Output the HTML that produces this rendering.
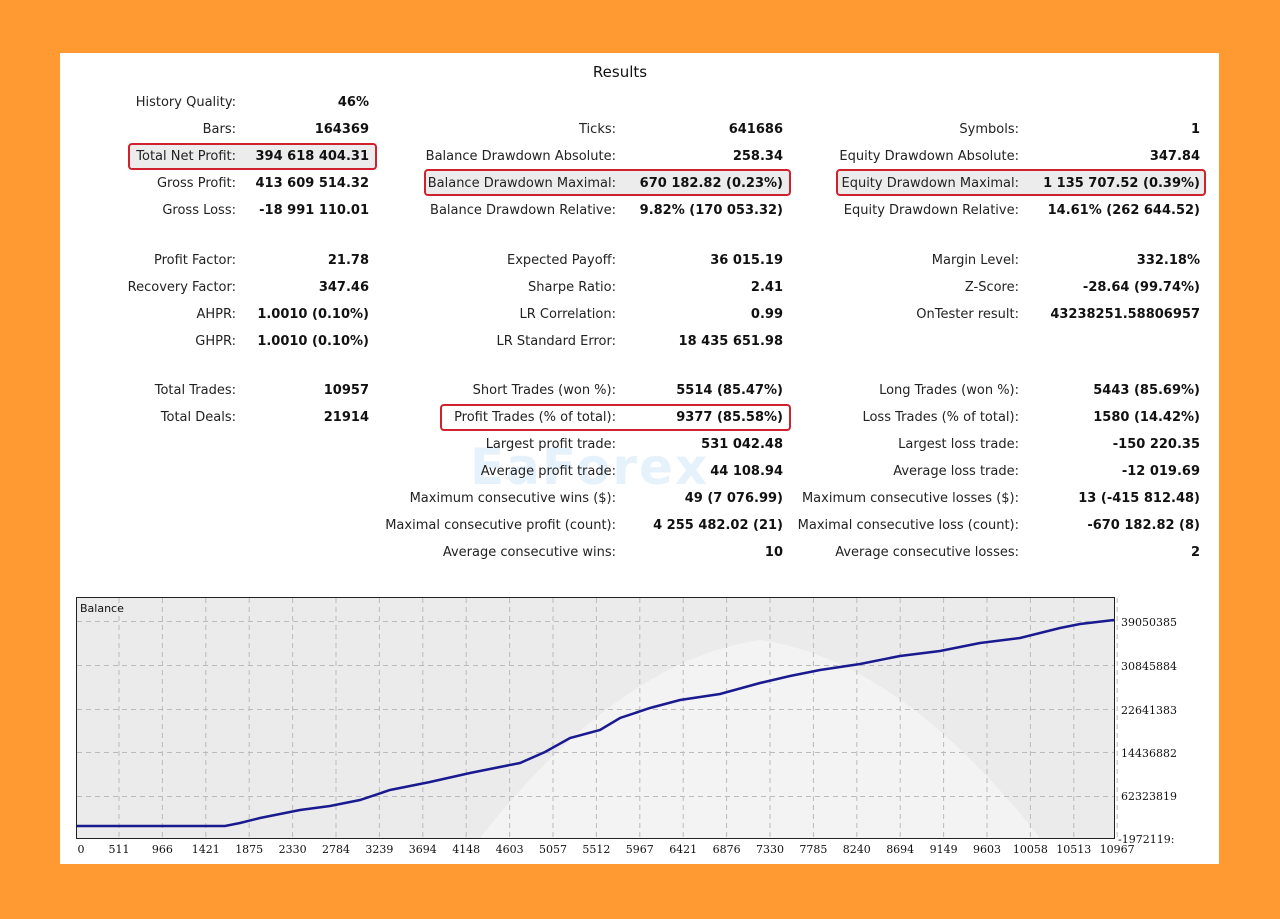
<!DOCTYPE html>
<html><head><meta charset="utf-8"><style>
body{margin:0;width:1280px;height:919px;background:#FF9A33;position:relative;overflow:hidden;font-family:"DejaVu Sans","Liberation Sans",sans-serif;}
#p{position:absolute;left:60px;top:53px;width:1159px;height:811px;background:#fff;}
.l,.v{position:absolute;font-size:13px;white-space:nowrap;color:#222;line-height:16px;}
.l{text-align:right;}
.v{text-align:right;font-weight:bold;color:#111;}
.box{position:absolute;border:2px solid #d0222e;border-radius:4px;box-sizing:border-box;}
</style></head><body>
<div id="p"></div>
<div style="position:absolute;left:560px;top:63px;width:120px;text-align:center;font-size:15px;color:#111">Results</div>
<div class="box" style="left:128px;top:143px;width:249px;height:27px;background:#ececec"></div>
<div class="box" style="left:424px;top:169px;width:367px;height:27px;background:#ececec"></div>
<div class="box" style="left:836px;top:169px;width:370px;height:27px;background:#ececec"></div>
<div class="box" style="left:440px;top:404px;width:351px;height:27px"></div>
<div style="position:absolute;left:470px;top:438px;font-size:50px;font-weight:bold;color:rgba(90,170,230,0.15);letter-spacing:2px">EaForex</div>
<div id="rows"></div>
<svg style="position:absolute;left:0;top:0" width="1280" height="919">
<rect x="76.5" y="597.5" width="1038" height="241" fill="#ebebeb" stroke="#222"/>
<path d="M480 838 Q620 660 760 640 Q900 660 1040 838Z" fill="#f3f3f3"/>
<g stroke="#bbb" stroke-dasharray="5,4" stroke-width="1">
<line x1="77" y1="621.5" x2="1114" y2="621.5"/><line x1="77" y1="665.5" x2="1114" y2="665.5"/><line x1="77" y1="709.5" x2="1114" y2="709.5"/><line x1="77" y1="752.5" x2="1114" y2="752.5"/><line x1="77" y1="796.5" x2="1114" y2="796.5"/>
</g>
<g id="vg" stroke="#bbb" stroke-dasharray="5,4"></g>
<polyline fill="none" stroke="#1a1a90" stroke-width="2.5" points="77,826 225,826 240,823 260,818 300,810 330,806 360,800 390,790 430,782 470,773 520,763 545,752 570,738 600,730 620,718 650,708 680,700 720,694 760,683 790,676 820,670 860,664 900,656 940,651 980,643 1020,638 1060,628 1080,624 1114,620"/>
<text x="80" y="612" font-size="11" font-family="DejaVu Sans" fill="#111">Balance</text>
<g font-size="11" font-family="DejaVu Serif, Liberation Serif, serif" fill="#111">
<text x="1121" y="626">39050385</text><text x="1121" y="670">30845884</text><text x="1121" y="714">22641383</text><text x="1121" y="757">14436882</text><text x="1121" y="800">62323819</text><text x="1118" y="843">-1972119:</text>
</g>
<g id="xl" font-size="11" font-family="DejaVu Serif, Liberation Serif, serif" fill="#111" text-anchor="middle"></g>
</svg>
<script>
var R=[101,128,155,182,209,259,286,313,340,389,416,443,470,497,524,551];
var d=[
[0,"History Quality:","46%"],[1,"Bars:","164369"],[2,"Total Net Profit:","394 618 404.31"],[3,"Gross Profit:","413 609 514.32"],[4,"Gross Loss:","-18 991 110.01"],
[5,"Profit Factor:","21.78"],[6,"Recovery Factor:","347.46"],[7,"AHPR:","1.0010 (0.10%)"],[8,"GHPR:","1.0010 (0.10%)"],[9,"Total Trades:","10957"],[10,"Total Deals:","21914"]];
var d2=[[1,"Ticks:","641686"],[2,"Balance Drawdown Absolute:","258.34"],[3,"Balance Drawdown Maximal:","670 182.82 (0.23%)"],[4,"Balance Drawdown Relative:","9.82% (170 053.32)"],[5,"Expected Payoff:","36 015.19"],[6,"Sharpe Ratio:","2.41"],[7,"LR Correlation:","0.99"],[8,"LR Standard Error:","18 435 651.98"],[9,"Short Trades (won %):","5514 (85.47%)"],[10,"Profit Trades (% of total):","9377 (85.58%)"],[11,"Largest profit trade:","531 042.48"],[12,"Average profit trade:","44 108.94"],[13,"Maximum consecutive wins ($):","49 (7 076.99)"],[14,"Maximal consecutive profit (count):","4 255 482.02 (21)"],[15,"Average consecutive wins:","10"]];
var d3=[[1,"Symbols:","1"],[2,"Equity Drawdown Absolute:","347.84"],[3,"Equity Drawdown Maximal:","1 135 707.52 (0.39%)"],[4,"Equity Drawdown Relative:","14.61% (262 644.52)"],[5,"Margin Level:","332.18%"],[6,"Z-Score:","-28.64 (99.74%)"],[7,"OnTester result:","43238251.58806957"],[9,"Long Trades (won %):","5443 (85.69%)"],[10,"Loss Trades (% of total):","1580 (14.42%)"],[11,"Largest loss trade:","-150 220.35"],[12,"Average loss trade:","-12 019.69"],[13,"Maximum consecutive losses ($):","13 (-415 812.48)"],[14,"Maximal consecutive loss (count):","-670 182.82 (8)"],[15,"Average consecutive losses:","2"]];
var h="";
function add(a,lr,vr){a.forEach(function(r){var y=R[r[0]]-6;h+='<div class="l" style="right:'+(1280-lr)+'px;top:'+y+'px">'+r[1]+'</div><div class="v" style="right:'+(1280-vr)+'px;top:'+y+'px">'+r[2]+'</div>';});}
add(d,236,369);add(d2,616,783);add(d3,1019,1200);
document.getElementById("rows").innerHTML=h;
var xs=["0","511","966","1421","1875","2330","2784","3239","3694","4148","4603","5057","5512","5967","6421","6876","7330","7785","8240","8694","9149","9603","10058","10513","10967"];
var g="",t="";
for(var i=0;i<xs.length;i++){var x=i==0?79:119+(i-1)*43.4;if(i>0)g+='<line x1="'+x+'" y1="598" x2="'+x+'" y2="838"/>';t+='<text x="'+(i==0?81:x)+'" y="853">'+xs[i]+'</text>';}
document.getElementById("vg").innerHTML=g;document.getElementById("xl").innerHTML=t;
</script>
</body></html>
